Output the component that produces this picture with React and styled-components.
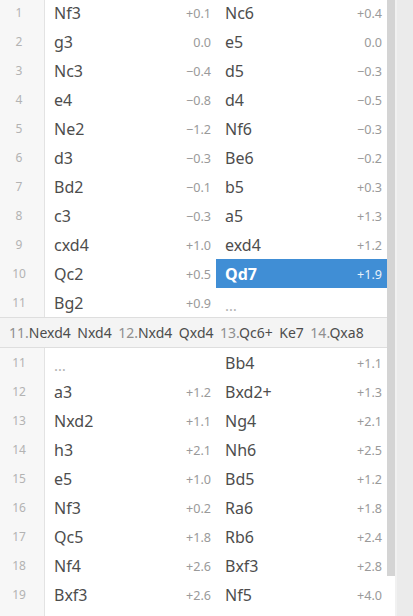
import React from 'react';
import styled, { createGlobalStyle } from 'styled-components';

const GlobalStyle = createGlobalStyle`
  html, body {
    margin: 0;
    padding: 0;
    background: #ebebeb;
    font-family: "Noto Sans", "Liberation Sans", sans-serif;
  }
`;

const Page = styled.div`
  display: flex;
  height: 616px;
`;

const Viewport = styled.div`
  width: 387px;
  height: 616px;
  background: #fff;
  overflow: hidden;
`;

const Track = styled.div`
  width: 8px;
  height: 616px;
  background: #fff;
`;

const Thumb = styled.div`
  height: 576px;
  background: #d4d4d4;
`;

const Edge = styled.div`
  width: 2px;
  background: #f1f1f1;
`;

const Moves = styled.div`
  display: grid;
  grid-template-columns: 45px 171px 171px;
  margin-top: -2px;
  padding-bottom: 48px;
  background: linear-gradient(to right, #f7f7f7 44px, #e3e3e3 44px, #e3e3e3 45px, #fff 45px);
`;

const Index = styled.div`
  height: 29px;
  line-height: 29px;
  padding-right: 7px;
  text-align: center;
  font-size: 12px;
  color: #b3b3b3;
`;

const Move = styled.div`
  display: flex;
  align-items: center;
  justify-content: space-between;
  height: 29px;
  padding: 0 5px 0 9px;
  font-size: 16px;
  color: ${(p) => (p.$active ? '#fff' : '#4d4d4d')};
  font-weight: ${(p) => (p.$active ? 700 : 400)};
  background: ${(p) => (p.$active ? '#408ed5' : 'transparent')};
`;

const Eval = styled.span`
  font-size: 12.6px;
  font-weight: 400;
  padding-top: 1px;
  color: ${(p) => (p.$active ? '#e8f1fa' : '#9a9a9a')};
`;

const Empty = styled.span`
  color: #b3b3b3;
  font-size: 15px;
  padding-top: 4px;
`;

const Interrupt = styled.div`
  grid-column: 1 / -1;
  display: flex;
  align-items: center;
  height: 29px;
  padding: 0 9px;
  background: #f4f4f4;
  border-top: 1px solid #dedede;
  border-bottom: 1px solid #dedede;
  font-size: 14px;
  color: #4d4d4d;
  white-space: nowrap;
`;

const LineMove = styled.span`
  margin-right: 6.5px;
`;

const LineIndex = styled.span`
  color: #8f8f8f;
`;

const main = [
  [1, 'Nf3', '+0.1', 'Nc6', '+0.4'],
  [2, 'g3', '0.0', 'e5', '0.0'],
  [3, 'Nc3', '−0.4', 'd5', '−0.3'],
  [4, 'e4', '−0.8', 'd4', '−0.5'],
  [5, 'Ne2', '−1.2', 'Nf6', '−0.3'],
  [6, 'd3', '−0.3', 'Be6', '−0.2'],
  [7, 'Bd2', '−0.1', 'b5', '+0.3'],
  [8, 'c3', '−0.3', 'a5', '+1.3'],
  [9, 'cxd4', '+1.0', 'exd4', '+1.2'],
  [10, 'Qc2', '+0.5', 'Qd7', '+1.9', true],
  [11, 'Bg2', '+0.9', null, null],
];

const rest = [
  [11, null, null, 'Bb4', '+1.1'],
  [12, 'a3', '+1.2', 'Bxd2+', '+1.3'],
  [13, 'Nxd2', '+1.1', 'Ng4', '+2.1'],
  [14, 'h3', '+2.1', 'Nh6', '+2.5'],
  [15, 'e5', '+1.0', 'Bd5', '+1.2'],
  [16, 'Nf3', '+0.2', 'Ra6', '+1.8'],
  [17, 'Qc5', '+1.8', 'Rb6', '+2.4'],
  [18, 'Nf4', '+2.6', 'Bxf3', '+2.8'],
  [19, 'Bxf3', '+2.6', 'Nf5', '+4.0'],
];

const line = [
  ['11.', 'Nexd4'],
  [null, 'Nxd4'],
  ['12.', 'Nxd4'],
  [null, 'Qxd4'],
  ['13.', 'Qc6+'],
  [null, 'Ke7'],
  ['14.', 'Qxa8'],
];

const Cell = ({ san, ev, active }) => (
  <Move $active={active}>
    {san ? (
      <>
        <span>{san}</span>
        <Eval $active={active}>{ev}</Eval>
      </>
    ) : (
      <Empty>…</Empty>
    )}
  </Move>
);

const Rows = ({ rows }) =>
  rows.map(([n, w, we, b, be, active]) => (
    <React.Fragment key={`${n}-${w}-${b}`}>
      <Index>{n}</Index>
      <Cell san={w} ev={we} />
      <Cell san={b} ev={be} active={active} />
    </React.Fragment>
  ));

const App = () => (
  <Page>
    <GlobalStyle />
    <Viewport>
      <Moves>
        <Rows rows={main} />
        <Interrupt>
          {line.map(([idx, san], i) => (
            <LineMove key={i}>
              {idx && <LineIndex>{idx}</LineIndex>}
              {san}
            </LineMove>
          ))}
        </Interrupt>
        <Rows rows={rest} />
      </Moves>
    </Viewport>
    <Track>
      <Thumb />
    </Track>
    <Edge />
  </Page>
);

export default App;
